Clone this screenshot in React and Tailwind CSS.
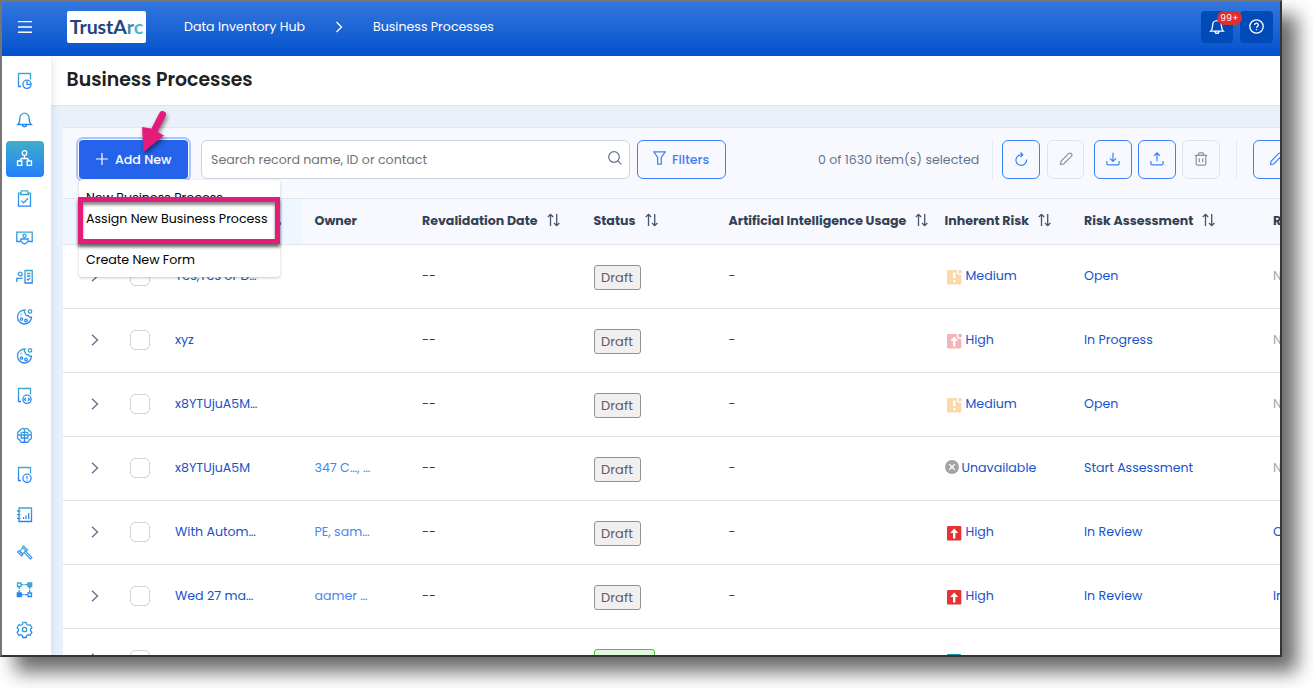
import React from "react";

// Side menu entries, top to bottom
const menuItems = [
  { name: "report", height: "h-[39.5px]" },
  { name: "bell", height: "h-[38.5px]" },
  { name: "tree", height: "h-[40.5px]", active: true },
  { name: "clipboard", height: "h-[38.5px]" },
  { name: "certificate", height: "h-[39.5px]" },
  { name: "contact", height: "h-[39.5px]" },
  { name: "cookie", height: "h-[39.5px]" },
  { name: "cookie", height: "h-[39.5px]" },
  { name: "code", height: "h-[40px]" },
  { name: "brain", height: "h-[39.5px]" },
  { name: "alert", height: "h-[39.5px]" },
  { name: "chart", height: "h-[39.5px]" },
  { name: "gavel", height: "h-[36px]" },
  { name: "flow", height: "h-[39px]" },
  { name: "gear", height: "h-[40px]" },
];

const page = <path d="M5 14.5H2.5V1.5h12v6" />;

const iconShapes = {
  report: (
    <>
      {page}
      <circle cx="11" cy="12.3" r="4.1" />
      <path d="M11 8.3v4h4" />
    </>
  ),
  bell: (
    <path d="M1.8 13.5c1.7-1.4 2-2.6 2-6a4.7 5.3 0 0 1 9.4 0c0 3.4.3 4.6 2 6zM6.5 13.7a2 2 0 0 0 4 0" />
  ),
  tree: (
    <>
      <circle cx="8.5" cy="3" r="2.3" />
      <path d="M8.5 5.3V9M3.7 11l1.8-2.5h6l1.8 2.5M1.5 11h4.3v4.3H1.5zM11.2 11h4.3v4.3h-4.3z" />
    </>
  ),
  clipboard: (
    <path d="M4.5 3.2H2.5v13h12v-13h-2M5.5.9h6l1 3.6h-8zM5.4 10.6l2.3 2.3 4.2-4.6" />
  ),
  certificate: (
    <>
      <path d="M4.5 12.5H.8V3.2h15.4v9.3h-3.7" />
      <circle cx="8.5" cy="6.8" r="1.6" />
      <path d="M4.8 12.3V10h7.4v2.3l-2 1.7-1.7 1-1.7-1z" />
    </>
  ),
  contact: (
    <>
      <circle cx="4.3" cy="6" r="1.9" />
      <path d="M.8 14v-3.6h5.7M9 2.5h7.2V15H9zM11 5.5h3.5M11 8h3.5M11 11l1 1 2-2" />
    </>
  ),
  cookie: (
    <>
      <path d="M9 2A7 7 0 1 0 15.5 9c-1.5.8-2.7 0-3-1.3C10.5 8 9 6.8 9.3 5.2 8 4.5 8 3 9 2z" />
      <circle cx="14" cy="3.4" r="1.7" />
      <circle cx="5.5" cy="11" r="1.2" />
      <circle cx="10" cy="12.5" r="1.3" />
      <path d="M4.5 6.5h1" />
    </>
  ),
  code: (
    <>
      {page}
      <circle cx="11" cy="12.3" r="4.1" />
      <path d="M10 10.9l-1.5 1.4 1.5 1.4M12 10.9l1.5 1.4-1.5 1.4" />
    </>
  ),
  brain: (
    <path d="M8.5 2.5C7 .8 4.5 1.5 4.3 3.5 2 4 1 6.3 2 8c-1.2 2-.3 4.3 1.7 4.8.5 2.7 3.6 3.3 4.8 1.7 1.2 1.6 4.3 1 4.8-1.7 2-.5 2.9-2.8 1.700-4.800 1-1.700 0-4-2.300-4.500C12.500 1.500 10 .8 8.500 2.500zM8.500 2.500v12M2 8h13M5.200 5v2M11.800 5v2M5.200 8v3h3M11.800 8v3h-3M6 5.300h5" />
  ),
  alert: (
    <>
      {page}
      <circle cx="11" cy="12.3" r="4.1" />
      <path d="M11 10v2.7M11 13.8v.8" />
    </>
  ),
  chart: (
    <path d="M3 2h12.5v13.5H3zM1 5h3.5M1 8.7h3.5M1 12.4h3.5M7.5 13v-2M10 13V9.5M12.7 13V7" />
  ),
  gavel: (
    <path strokeWidth="1.1" d="M7.5 2l4 4-1.2 1.2-4-4zM2.8 6.7l4 4L5.6 12l-4-4zM6.5 4.2L3.8 6.9l2.9 2.9 2.7-2.7M8.2 8.7l6.3 6.3 1.4-1.4-6.3-6.2" />
  ),
  flow: (
    <>
      <path d="M1.5 2H5v3.5H1.5zM12 12h3.5v3.5H12z" />
      <path d="M5 3.7h7M3.2 5.5V12M5 13.7h7M13.7 5.5V12" strokeDasharray="2.6 .9" />
      <path className="fill-[#3fa9d2]" d="M11.8 1.8h3.9v3.9h-3.9z" />
      <path className="fill-[#2b7ff0]" d="M1.3 11.8h3.9v3.9H1.3z" />
    </>
  ),
  gear: (
    <>
      <circle cx="8.5" cy="8.5" r="2.2" />
      <path strokeLinejoin="round" d="M6.8 1.5h3.4l.5 2 1.5.8 2-.6 1.7 3-1.4 1.5v1.6l1.4 1.5-1.7 3-2-.6-1.5.8-.5 2H6.8l-.5-2-1.5-.8-2 .6-1.7-3 1.4-1.5V8.2L1.1 6.7l1.7-3 2 .6 1.5-.8z" />
    </>
  ),
};

function MenuIcon({ name, active }) {
  return (
    <svg className="w-[17px] h-[17px] overflow-visible" viewBox="0 0 17 17" fill="none" stroke={active ? "#ffffff" : "url(#menuStroke)"} strokeWidth="1.3">
      {iconShapes[name]}
    </svg>
  );
}

function SideBar() {
  return (
    <nav className="relative z-10 w-[49px] shrink-0 bg-white pt-[4.5px] shadow-[2px_0_8px_rgba(60,90,150,0.13)]">
      {/* Gradient shared by the menu icons */}
      <svg className="absolute w-0 h-0">
        <defs>
          <linearGradient id="menuStroke" gradientUnits="userSpaceOnUse" x1="0" y1="0" x2="0" y2="17">
            <stop offset="0" stopColor="#41adc9" />
            <stop offset="1" stopColor="#267dfa" />
          </linearGradient>
        </defs>
      </svg>
      {menuItems.map((item, i) => (
        <div key={i} className={`flex items-center justify-center pr-[3.5px] ${item.height}`}>
          <div className={item.active ? "flex items-center justify-center w-[38px] h-9 shrink-0 rounded bg-linear-to-b from-[#43adc8] to-[#267dfa]" : ""}>
            <MenuIcon name={item.name} active={item.active} />
          </div>
        </div>
      ))}
    </nav>
  );
}

function TopBar() {
  return (
    <header className="flex items-center h-[54px] shrink-0 bg-linear-to-b from-[#3277de] to-[#0051cd] text-white text-[12.6px] pb-[5px]">
      <svg className="w-[14px] h-[12px] ml-4 mr-px shrink-0" viewBox="0 0 14 12" fill="#ffffff">
        <path d="M0 0h14v1.3H0zM0 5.3h14v1.4H0zM0 10.6h14V12H0z" />
      </svg>
      <div className="flex items-center justify-center w-[79px] h-8 ml-[34px] rounded-[2px] bg-white font-['Lato',sans-serif] font-bold text-[19.5px] tracking-[-0.1px] text-[#21457b]">
        TrustA<span className="text-[#4388ab]">r</span><span className="text-[#43bdcc]">c</span>
      </div>
      <span className="ml-[38px] w-[121px] mt-[2px] whitespace-nowrap">Data Inventory Hub</span>
      <svg className="w-[8px] h-[12px] ml-[30px]" viewBox="0 0 8 12" fill="none" stroke="#ffffff" strokeWidth="1.3">
        <path d="M1.5 1L6.5 6l-5 5" />
      </svg>
      <span className="ml-[30px] mt-[2px] whitespace-nowrap">Business Processes</span>
      <div className="relative flex items-center justify-center w-8 h-8 ml-auto rounded bg-[#004bb8]">
        <svg className="w-[16px] h-[17px]" viewBox="0 0 17 17" fill="none" stroke="#ffffff" strokeWidth="1.4">
          {iconShapes.bell}
        </svg>
        <span className="absolute left-4 top-0 w-[25px] h-[14px] rounded-full bg-[#dc3030] text-[9px] leading-[14px] text-center tracking-[0.3px]">99+</span>
      </div>
      <div className="flex items-center justify-center w-[33px] h-8 ml-[7px] mr-[7px] pb-px pr-px rounded bg-[#004bb8]">
        <svg className="w-[15px] h-[15px]" viewBox="0 0 15 15" fill="none" stroke="#ffffff" strokeWidth="1.3">
          <circle cx="7.5" cy="7.5" r="6.7" />
          <path d="M5.7 6a1.8 1.8 0 1 1 2.6 1.6c-.6.3-.8.6-.8 1.2M7.5 10v1.2" />
        </svg>
      </div>
    </header>
  );
}

function SortIcon() {
  return (
    <svg className="w-[13px] h-[14px] shrink-0 -mt-[3px]" viewBox="0 0 13 14" fill="none" stroke="#475569" strokeWidth="1.3">
      <path d="M3.5 13V1.5M.8 4l2.7-2.7L6.2 4M9.7 1v11.5M7 10l2.7 2.7L12.4 10" />
    </svg>
  );
}

const toolIcons = {
  refresh: <path d="M12.5 7.5A5.3 5.3 0 1 1 7 2.8h1.5M6.5.5l2.3 2.3L6.5 5.1" />,
  pencil: <path d="M1.5 12.5L2 9.3 9.6 1.7a1.7 1.7 0 0 1 2.7 2.7L4.7 12z" />,
  download: <path d="M7 .8v8.4M4 6.3l3 3 3-3M.9 9v2.5c0 .8.5 1.3 1.3 1.3h9.6c.8 0 1.3-.5 1.3-1.3V9" />,
  upload: <path d="M7 9.2V.9M4 3.8l3-3 3 3M.9 9v2.5c0 .8.5 1.3 1.3 1.3h9.6c.8 0 1.3-.5 1.3-1.3V9" />,
  trash: <path d="M.8 3.3h12.4M2.2 3.3v8.7c0 .7.5 1.2 1.2 1.2h7.2c.7 0 1.2-.5 1.2-1.2V3.3M4.5 3V1.8c0-.6.4-1 1-1h3c.6 0 1 .4 1 1V3M5.3 6.3v4M8.7 6.3v4" />,
};

function ToolButton({ icon, className }) {
  return (
    <button className={`flex items-center justify-center h-[39px] shrink-0 rounded-md border ${className}`}>
      <svg className="w-[14px] h-[14px] -mt-[2px]" viewBox="0 0 14 14" fill="none" stroke="currentColor" strokeWidth="1.2">
        {toolIcons[icon]}
      </svg>
    </button>
  );
}

function AddMenu() {
  return (
    <div className="absolute z-20 left-0 top-10 w-[201px] h-[97px] rounded-[3px] bg-white shadow-[0_1px_3px_rgba(0,0,0,0.22)] pl-[7px] text-[12.6px] text-black whitespace-nowrap">
      <div className="h-[30px] pt-2 leading-5">New Business Process</div>
      <div className="h-[39px] leading-[17px]">Assign New Business Process</div>
      <div className="leading-[22px]">Create New Form</div>
      {/* Callout around the highlighted entry */}
      <div className="absolute -left-px top-[17px] w-[202px] h-[47px] border-[5px] border-[#e31b7b] shadow-[0_3px_3px_rgba(0,0,0,0.6)]">
        <div className="w-full h-full shadow-[inset_0_3px_3px_rgba(0,0,0,0.45)]" />
      </div>
    </div>
  );
}

function Toolbar() {
  return (
    <div className="flex items-center h-[71px] shrink-0 border-t border-[#dfe7ef] bg-[#f8f9fe] pl-4 pb-[7px] text-[12.6px]">
      <div className="relative shrink-0">
        <button className="flex items-center w-[109px] h-[39px] pl-[17px] rounded-[4px] bg-[#2563eb] text-white font-medium shadow-[0_0_0_1px_#f8f9fe,0_0_0_3px_#a8c6fb]">
          <svg className="w-3 h-3 mr-[7px] -mt-[2px]" viewBox="0 0 12 12" stroke="#ffffff" strokeWidth="1.2">
            <path d="M6 0v12M0 6h12" />
          </svg>
          <span className="mt-[2px] whitespace-nowrap">Add New</span>
        </button>
        <AddMenu />
        <svg className="absolute z-20 left-[58px] -top-[31px] w-[34px] h-[46px] drop-shadow-[1px_3px_2px_rgba(0,0,0,0.5)]" viewBox="0 0 34 46">
          <path d="M25.5 5.5L16 24" stroke="#e31b7b" strokeWidth="7" strokeLinecap="round" />
          <path d="M5 18l9 1.5 13 7L6.5 43z" fill="#e31b7b" />
        </svg>
      </div>
      <div className="flex items-center w-[429px] h-[39px] ml-[13px] px-[9px] shrink-0 rounded-md border border-[#cbd5e1] bg-white text-[#737373]">
        <span className="flex-1 mt-[2px]">Search record name, ID or contact</span>
        <svg className="w-[14px] h-[14px] -mt-[3px] -mr-[2px]" viewBox="0 0 14 14" fill="none" stroke="#64748b" strokeWidth="1.2">
          <circle cx="6" cy="6" r="5.3" />
          <path d="M9.8 9.8l3.6 3.6" />
        </svg>
      </div>
      <button className="flex items-center w-[89px] h-[39px] ml-[7px] pl-[15px] shrink-0 rounded-md border border-[#3b82f6] text-[#3b82f6] font-medium">
        <svg className="w-[13px] h-[14px] mr-[6px] -mt-[3px]" viewBox="0 0 13 14" fill="none" stroke="currentColor" strokeWidth="1.2">
          <path d="M.8.8h11.4L8.3 6.5v6.7H4.7V6.5z" />
        </svg>
        <span className="mt-[2px]">Filters</span>
      </button>
      <span className="ml-[92px] w-[161px] mt-[2px] shrink-0 whitespace-nowrap text-[#64748b]">0 of 1630 item(s) selected</span>
      <div className="w-px h-[41px] ml-[13px] shrink-0 bg-[#e6ebf1]" />
      <ToolButton icon="refresh" className="w-[38px] ml-[9px] border-[#3b82f6] text-[#3b82f6]" />
      <ToolButton icon="pencil" className="w-[37px] ml-[7px] border-[#dde3eb] text-[#8a919c]" />
      <ToolButton icon="download" className="w-[38px] ml-[10px] border-[#3b82f6] text-[#3b82f6]" />
      <ToolButton icon="upload" className="w-[38px] ml-[6px] border-[#3b82f6] text-[#3b82f6]" />
      <ToolButton icon="trash" className="w-[38px] ml-[6px] border-[#dde3eb] text-[#8a919c]" />
      <div className="w-px h-[41px] ml-4 shrink-0 bg-[#e6ebf1]" />
      <ToolButton icon="pencil" className="w-[45px] ml-4 border-[#3b82f6] text-[#3b82f6]" />
    </div>
  );
}

const rows = [
  { name: "Yes,Yes or D…", owner: "", level: "Medium", pending: true, assessment: "Open", next: "N/A" },
  { name: "xyz", owner: "", level: "High", pending: true, assessment: "In Progress", next: "N/A" },
  { name: "x8YTUjuA5M…", owner: "", level: "Medium", pending: true, assessment: "Open", next: "N/A" },
  { name: "x8YTUjuA5M", owner: "347 C…, …", level: "Unavailable", assessment: "Start Assessment", next: "N/A" },
  { name: "With Autom…", owner: "PE, sam…", level: "High", assessment: "In Review", next: "Open" },
  { name: "Wed 27 ma…", owner: "aamer …", level: "High", assessment: "In Review", next: "In Review" },
];

function RiskIcon({ level, pending }) {
  if (level === "Unavailable") {
    return (
      <svg className="w-[14px] h-[14px] mr-[3px] -mt-px" viewBox="0 0 14 14">
        <circle cx="7" cy="7" r="7" fill="#a3a3a3" />
        <path d="M4.3 4.3l5.4 5.4M9.7 4.3l-5.4 5.4" stroke="#ffffff" strokeWidth="1.3" />
      </svg>
    );
  }
  const color = level === "Medium" ? "#fbd7ab" : pending ? "#f6b3b6" : "#e6332f";
  return (
    <svg className="w-[15px] h-[15px] ml-[2px] mr-1 mt-[3px]" viewBox="0 0 15 15">
      <rect x="0" y="0" width="14.3" height="14.5" rx="1.2" fill={color} />
      {level === "Medium" ? (
        <path d="M6 2.5h2.6v5.7H6zM6 10h2.6v2.3H6z" fill="#ffffff" />
      ) : (
        <path d="M7.2 2.5l4 4.6H8.4v5.3H6V7.1H3.2z" fill="#ffffff" />
      )}
      {pending && (
        <>
          <circle cx="13" cy="1.8" r="3.2" fill="#ffffff" />
          <circle cx="13" cy="1.8" r="1.9" fill={color} />
        </>
      )}
    </svg>
  );
}

const columns = "grid grid-cols-[67px_45px_127px_120px_171.5px_135px_216px_139.5px_189px_1fr] shrink-0";

function RowStart() {
  return (
    <>
      <svg className="w-2 h-3 ml-7 -mt-px" viewBox="0 0 8 12" fill="none" stroke="#64748b" strokeWidth="1.4">
        <path d="M1 .7L6.5 6 1 11.3" />
      </svg>
      <span className="w-5 h-5 rounded-[5px] border border-[#cbd5e1] bg-white" />
    </>
  );
}

function Table() {
  return (
    <div className="text-[12.6px] whitespace-nowrap">
      <div className={`${columns} h-[47px] border-y border-[#dfe7ef] bg-[#f8f9fe] text-[#334155] font-bold items-center`}>
        <div className="col-span-3 self-stretch flex items-center justify-end bg-[#eff6ff] pr-[21px]">
          <span className="w-px h-[3px] mt-1 bg-[#3b82f6]" />
        </div>
        <span className="pl-[12.5px]">Owner</span>
        <span className="flex items-center gap-[9px]">Revalidation Date <SortIcon /></span>
        <span className="flex items-center gap-[9px]">Status <SortIcon /></span>
        <span className="flex items-center gap-[8.5px]">Artificial Intelligence Usage <SortIcon /></span>
        <span className="flex items-center gap-[8.5px]">Inherent Risk <SortIcon /></span>
        <span className="flex items-center gap-[8.5px]">Risk Assessment <SortIcon /></span>
        <span>Residual Risk</span>
      </div>
      {rows.map((row, i) => (
        <div key={i} className={`${columns} h-16 pb-px items-center border-b border-[#dfe5ee] text-[#1553cc]`}>
          <RowStart />
          <span>{row.name}</span>
          <span className="pl-[12.5px] text-[#4a86f0]">{row.owner}</span>
          <span className="text-[#334155]">--</span>
          <span className="w-[47px] h-[25px] mt-[3px] rounded-[3px] border border-[#929292] bg-[#f0f0f0] text-[13px] text-[#5c5c5c] leading-6 text-center">Draft</span>
          <span className="text-[#334155]">-</span>
          <span className="flex items-center">
            <RiskIcon level={row.level} pending={row.pending} />
            {row.level}
          </span>
          <span>{row.assessment}</span>
          <span className={row.next === "N/A" ? "text-[#a3a3a3]" : ""}>{row.next}</span>
        </div>
      ))}
      {/* Last row runs past the bottom of the window */}
      <div className={`${columns} h-16 pb-[3px] items-center text-[#1553cc]`}>
        <RowStart />
        <span className="pt-[2px]">test demo bull</span>
        <span />
        <span />
        <span className="w-[61px] h-[25px] mt-[3px] rounded-[3px] border border-[#4fc13c] bg-[#e2f8de] text-center leading-7">Active</span>
        <span />
        <span className="flex items-center">
          <span className="w-[14px] h-[14px] ml-[2px] mr-[5px] mt-[3px] rounded-[1px] bg-[#1898ad]" />
          <span className="pt-[2px]">Minimal</span>
        </span>
      </div>
    </div>
  );
}

export default function App() {
  return (
    <div className="w-[1313px] h-[688px] overflow-hidden bg-white font-['Poppins','Inter',sans-serif]">
      <div className="flex flex-col w-[1282px] h-[657px] overflow-hidden border-2 border-t-[#757575] border-l-[#757575] border-r-[#353535] border-b-[#353535] bg-[#eaf1fa] shadow-[15px_15px_18px_rgba(0,0,0,0.58)]">
        <TopBar />
        <div className="flex flex-1 min-h-0">
          <SideBar />
          <main className="flex flex-col flex-1 min-w-0">
            <div className="flex h-[50px] shrink-0 items-center border-b border-[#dfe5ee] bg-white pl-[15.5px]">
              <h1 className="text-[18.9px] font-semibold text-[#212121]">Business Processes</h1>
            </div>
            <section className="flex flex-col flex-1 min-h-0 mt-[21px] ml-3 bg-white">
              <Toolbar />
              <Table />
            </section>
          </main>
        </div>
      </div>
    </div>
  );
}
